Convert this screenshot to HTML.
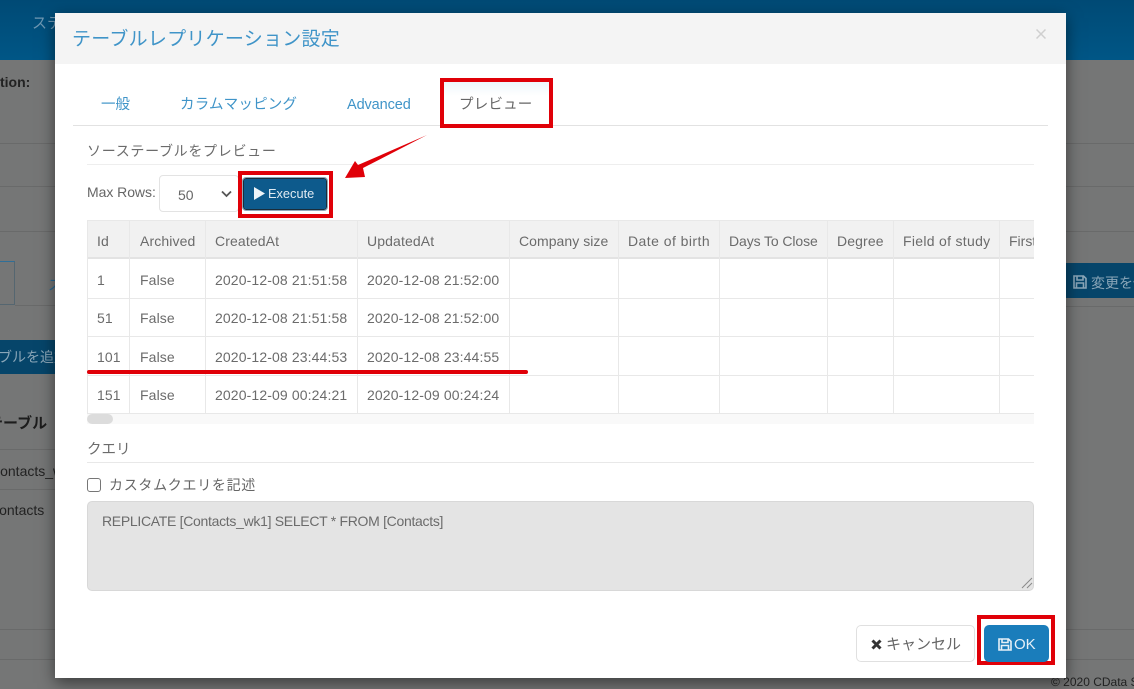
<!DOCTYPE html>
<html lang="ja"><head><meta charset="utf-8">
<style>
html,body{margin:0;padding:0}
body{width:1134px;height:683px;position:relative;overflow:hidden;background:#757676;font-family:"Liberation Sans","Noto Sans CJK JP",sans-serif;color:#666;font-size:14px}
.a{position:absolute;white-space:nowrap}
.l{position:absolute;background:#e8e8e8}
.bl{position:absolute;background:#696a6a}
.r{position:absolute;border:4px solid #e00008;box-sizing:border-box}
.c{position:absolute;white-space:nowrap;color:#6b6b6b;font-size:14px;line-height:20px;letter-spacing:.12px}
</style></head><body>
<!-- background -->
<div class="a" style="left:0;top:0;width:1134px;height:60px;background:linear-gradient(#004a75,#005686)"></div>
<div class="a" style="left:32px;top:12px;color:#6f98b3;font-size:15px">ステ</div>
<div class="a" style="left:0;top:74px;font-weight:bold;color:#222;font-size:14px">tion:</div>
<div class="bl" style="left:0;top:143px;width:1134px;height:1px"></div>
<div class="bl" style="left:0;top:186px;width:1134px;height:1px"></div>
<div class="bl" style="left:0;top:231px;width:1134px;height:1px"></div>
<div class="a" style="left:0;top:261px;width:15px;height:44px;border:1px solid #556670;border-left:0;border-top-color:#2f6f98;box-sizing:border-box"></div>
<div class="bl" style="left:15px;top:305px;width:45px;height:1px"></div>
<div class="a" style="left:48px;top:275px;color:#2a6a95;font-size:14px">ス</div>
<div class="a" style="left:0;top:340px;width:60px;height:34px;background:#06456a"></div>
<div class="a" style="left:-2px;top:347px;color:#8aa6b8;font-size:14px">ブルを追加</div>
<div class="a" style="left:-12px;top:412px;color:#1c1c1c;font-size:15px;font-weight:bold">テーブル</div>
<div class="bl" style="left:0;top:449px;width:60px;height:1px"></div>
<div class="a" style="left:-10px;top:463px;color:#222;font-size:14px">Contacts_wk1</div>
<div class="bl" style="left:0;top:489px;width:60px;height:1px"></div>
<div class="a" style="left:-11px;top:502px;color:#222;font-size:14px">Contacts</div>
<div class="bl" style="left:0;top:629px;width:1134px;height:1px"></div>
<div class="bl" style="left:0;top:659px;width:1134px;height:1px"></div>
<div class="a" style="left:1066px;top:263px;width:68px;height:35px;background:#06456a"></div>
<svg class="a" style="left:1073px;top:275px" width="14" height="14" viewBox="0 0 14 14"><path d="M1 1h9.500L13 3.500V13H1zM4 1v4h6V1M3.500 13V8h7v5" fill="none" stroke="#8aa6b8" stroke-width="1.600"/></svg>
<div class="a" style="left:1091px;top:273px;color:#8aa6b8;font-size:14px">変更を保存</div>
<div class="bl" style="left:1066px;top:306px;width:68px;height:1px"></div>
<div class="a" style="left:1051px;top:675px;color:#222;font-size:12px">© 2020 CData S</div>
<!-- modal shadow -->
<div class="a" style="left:55px;top:13px;width:1011px;height:665px;background:#fff;box-shadow:0 5px 15px rgba(0,0,0,.5)"></div>
<!-- header -->
<div class="a" style="left:55px;top:13px;width:1011px;height:51px;background:#f4f4f4"></div>
<div class="a" style="left:72px;top:27px;color:#3f94c8;font-size:19px;line-height:25px;letter-spacing:.25px">テーブルレプリケーション設定</div>
<svg class="a" style="left:1036px;top:29px" width="10" height="10" viewBox="0 0 10 10"><path d="M.5.5l9 9M9.500.5l-9 9" stroke="#cfcfcf" stroke-width="1.500"/></svg>
<!-- tabs -->
<div class="l" style="left:73px;top:125px;width:975px;height:1px;background:#e2e2e2"></div>
<div class="a" style="left:101px;top:95px;color:#3f94c8;font-size:14.500px;line-height:20px">一般</div>
<div class="a" style="left:180px;top:95px;color:#3f94c8;font-size:14.500px;line-height:20px;letter-spacing:.2px">カラムマッピング</div>
<div class="a" style="left:347px;top:95px;color:#3f94c8;font-size:14.500px;line-height:20px;letter-spacing:-.1px">Advanced</div>
<div class="a" style="left:444px;top:82px;width:105px;height:43px;background:linear-gradient(#eef6fb,#fff 14px)"></div>
<div class="a" style="left:459px;top:95px;color:#666;font-size:14.500px;line-height:20px;letter-spacing:.2px">プレビュー</div>
<div class="r" style="left:440px;top:78px;width:113px;height:50px"></div>
<!-- source preview -->
<div class="a" style="left:87px;top:141px;color:#6b6b6b;font-size:14px;line-height:20px;letter-spacing:.7px">ソーステーブルをプレビュー</div>
<div class="l" style="left:87px;top:164px;width:947px;height:1px;background:#eee"></div>
<div class="a" style="left:87px;top:182px;color:#666;font-size:14px;line-height:20px;letter-spacing:-.05px">Max Rows:</div>
<div class="a" style="left:159px;top:175px;width:80px;height:37px;border:1px solid #e3e3e3;border-radius:4px;box-sizing:border-box"></div>
<div class="a" style="left:178px;top:185px;color:#666;font-size:14px;line-height:20px">50</div>
<svg class="a" style="left:221px;top:190px" width="11" height="8" viewBox="0 0 11 8"><path d="M1 1.500l4.500 4.500L10 1.500" fill="none" stroke="#555" stroke-width="1.800"/></svg>
<div class="r" style="left:238px;top:171px;width:95px;height:47px"></div>
<div class="a" style="left:243px;top:178px;width:84px;height:32px;background:#0d5a8c;border:1.500px solid #1a2c3a;outline:1px solid #8fa8ba;border-radius:3px;box-sizing:border-box"></div>
<svg class="a" style="left:254px;top:187px" width="11" height="13" viewBox="0 0 11 13"><path d="M0 0l11 6.500L0 13z" fill="#eef4f8"/></svg>
<div class="a" style="left:268px;top:185px;color:#dfeaf2;font-size:12.800px;line-height:18px">Execute</div>
<!-- arrow -->
<svg class="a" style="left:340px;top:130px" width="92" height="56" viewBox="0 0 92 56"><path d="M87 5L23 38l2 9-20 1 10-17 3 4z" fill="#e00008"/></svg>
<!-- table -->
<div class="a" style="left:87px;top:220px;width:947px;height:39px;background:#f1f1f1;border-bottom:2px solid #e3e3e3;box-sizing:border-box"></div>
<div class="l" style="left:87px;top:220px;width:947px;height:1px"></div>
<div class="l" style="left:87px;top:298px;width:947px;height:1px"></div>
<div class="l" style="left:87px;top:336px;width:947px;height:1px"></div>
<div class="l" style="left:87px;top:375px;width:947px;height:1px"></div>
<div class="l" style="left:87px;top:413px;width:947px;height:1px"></div>
<div class="l" style="left:87px;top:220px;width:1px;height:194px"></div>
<div class="l" style="left:129px;top:220px;width:1px;height:194px"></div>
<div class="l" style="left:205px;top:220px;width:1px;height:194px"></div>
<div class="l" style="left:357px;top:220px;width:1px;height:194px"></div>
<div class="l" style="left:509px;top:220px;width:1px;height:194px"></div>
<div class="l" style="left:618px;top:220px;width:1px;height:194px"></div>
<div class="l" style="left:719px;top:220px;width:1px;height:194px"></div>
<div class="l" style="left:827px;top:220px;width:1px;height:194px"></div>
<div class="l" style="left:893px;top:220px;width:1px;height:194px"></div>
<div class="l" style="left:999px;top:220px;width:1px;height:194px"></div>
<div class="c" style="left:97px;top:231px">Id</div>
<div class="c" style="left:140px;top:231px">Archived</div>
<div class="c" style="left:215px;top:231px">CreatedAt</div>
<div class="c" style="left:367px;top:231px">UpdatedAt</div>
<div class="c" style="left:519px;top:231px;letter-spacing:.05px">Company size</div>
<div class="c" style="left:628px;top:231px;letter-spacing:.45px">Date of birth</div>
<div class="c" style="left:729px;top:231px;letter-spacing:-.1px">Days To Close</div>
<div class="c" style="left:837px;top:231px">Degree</div>
<div class="c" style="left:903px;top:231px;letter-spacing:.3px">Field of study</div>
<div class="a" style="left:1009px;top:231px;width:25px;overflow:hidden;color:#6b6b6b;line-height:20px">First Name</div>
<div class="c" style="left:97px;top:270px">1</div><div class="c" style="left:140px;top:270px">False</div><div class="c" style="left:215px;top:270px">2020-12-08 21:51:58</div><div class="c" style="left:367px;top:270px">2020-12-08 21:52:00</div>
<div class="c" style="left:97px;top:308px">51</div><div class="c" style="left:140px;top:308px">False</div><div class="c" style="left:215px;top:308px">2020-12-08 21:51:58</div><div class="c" style="left:367px;top:308px">2020-12-08 21:52:00</div>
<div class="c" style="left:97px;top:347px">101</div><div class="c" style="left:140px;top:347px">False</div><div class="c" style="left:215px;top:347px">2020-12-08 23:44:53</div><div class="c" style="left:367px;top:347px">2020-12-08 23:44:55</div>
<div class="c" style="left:97px;top:385px">151</div><div class="c" style="left:140px;top:385px">False</div><div class="c" style="left:215px;top:385px">2020-12-09 00:24:21</div><div class="c" style="left:367px;top:385px">2020-12-09 00:24:24</div>
<div class="a" style="left:87px;top:370px;width:441px;height:4px;background:#e00008;border-radius:2px"></div>
<div class="a" style="left:87px;top:414px;width:947px;height:10px;background:#f9f9f9"></div>
<div class="a" style="left:87px;top:414px;width:26px;height:10px;background:#dcdcdc;border-radius:5px"></div>
<!-- query -->
<div class="a" style="left:87px;top:440px;color:#6b6b6b;font-size:14.500px;line-height:20px">クエリ</div>
<div class="l" style="left:87px;top:462px;width:947px;height:1px"></div>
<div class="a" style="left:87px;top:478px;width:14px;height:14px;border:1px solid #767676;border-radius:3px;box-sizing:border-box;background:#fff"></div>
<div class="a" style="left:109px;top:475px;color:#666;font-size:14px;line-height:20px;letter-spacing:.7px">カスタムクエリを記述</div>
<div class="a" style="left:87px;top:501px;width:947px;height:90px;background:#e4e4e4;border:1px solid #d8d8d8;border-radius:5px;box-sizing:border-box"></div>
<div class="a" style="left:102px;top:511px;color:#6b6b6b;font-size:14px;line-height:20px;letter-spacing:-.3px">REPLICATE [Contacts_wk1] SELECT * FROM [Contacts]</div>
<svg class="a" style="left:1021px;top:577px" width="12" height="12" viewBox="0 0 12 12"><path d="M1 11L11 1M6 11l5-5" stroke="#8a8a8a" stroke-width="1"/></svg>
<!-- footer -->
<div class="a" style="left:856px;top:625px;width:119px;height:37px;border:1px solid #e0e0e0;border-radius:5px;box-sizing:border-box;background:#fff"></div>
<svg class="a" style="left:871px;top:639px" width="11" height="11" viewBox="0 0 11 11"><path d="M1.500 1.500l8 8M9.500 1.500l-8 8" stroke="#333" stroke-width="3"/></svg>
<div class="a" style="left:886px;top:635px;color:#666;font-size:15px;line-height:20px">キャンセル</div>
<div class="r" style="left:977px;top:615px;width:78px;height:50px"></div>
<div class="a" style="left:984px;top:625px;width:65px;height:37px;background:#1a7dbb;border-radius:5px"></div>
<svg class="a" style="left:998px;top:638px" width="14" height="13" viewBox="0 0 14 13"><path d="M1 1h9.500L13 3.500V12H1zM4 1v3.500h6V1M3.500 12V7.500h7V12" fill="none" stroke="#e6f0f7" stroke-width="1.600"/></svg>
<div class="a" style="left:1014px;top:635px;color:#e6f0f7;font-size:15px;line-height:20px">OK</div>
</body></html>
